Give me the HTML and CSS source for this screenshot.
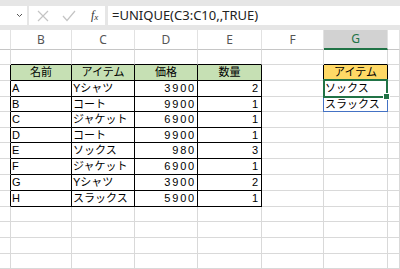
FILE: index.html
```html
<!DOCTYPE html>
<html lang="ja">
<head>
    <meta charset="UTF-8">
    <title>UNIQUE</title>
    <link rel="stylesheet" href="styles.css">
</head>
<body>
    <div class="fbar">
        <div class="namebox">
            <svg width="7" height="5" viewBox="0 0 7 5"><path d="M1 1 L3.5 3.5 L6 1" fill="none" stroke="#555" stroke-width="1"/></svg>
        </div>
        <div class="fbuttons">
            <svg width="12" height="12" viewBox="0 0 12 12"><path d="M1 1 L11 11 M11 1 L1 11" stroke="#c4c4c4" stroke-width="1.2"/></svg>
            <svg width="14" height="12" viewBox="0 0 14 12"><path d="M1 6 L5 10.5 L13 1" fill="none" stroke="#c4c4c4" stroke-width="1.2"/></svg>
            <span class="fx">f<sub>x</sub></span>
        </div>
        <div class="formula">=UNIQUE(C3:C10,,TRUE)</div>
    </div>

    <div id="sheet" class="sheet">
        <div class="spill"></div>
        <div class="select"><span class="handle"></span></div>
    </div>

    <script>
        const cols = ['', 'B', 'C', 'D', 'E', 'F', 'G', ''];
        const data = [
            ['A', 'Yシャツ', 3900, 2],
            ['B', 'コート', 9900, 1],
            ['C', 'ジャケット', 6900, 1],
            ['D', 'コート', 9900, 1],
            ['E', 'ソックス', 980, 3],
            ['F', 'ジャケット', 6900, 1],
            ['G', 'Yシャツ', 3900, 2],
            ['H', 'スラックス', 5900, 1]
        ];
        const unique = ['ソックス', 'スラックス'];
        const sheet = document.getElementById('sheet');

        function cell(text, cls) {
            const div = document.createElement('div');
            div.className = 'cell ' + (cls || '');
            div.textContent = text;
            sheet.appendChild(div);
        }

        // column headers
        cols.forEach((c, i) => cell(c, i === 6 ? 'colhead active' : 'colhead'));

        // sheet rows 1..14
        for (let r = 1; r <= 14; r++) {
            for (let c = 0; c < 8; c++) {
                let text = '';
                let cls = [];
                const inTable = r >= 2 && r <= 10 && c >= 1 && c <= 4;
                if (inTable) cls.push('tb');
                if (r === 1 && c >= 1 && c <= 4) cls.push('edge-b');
                if (c === 0 && r >= 2 && r <= 10) cls.push('edge-r');

                if (r === 2 && c >= 1 && c <= 4) {
                    text = ['名前', 'アイテム', '価格', '数量'][c - 1];
                    cls.push('head');
                } else if (inTable) {
                    const v = data[r - 3][c - 1];
                    text = v;
                    if (typeof v === 'number') cls.push('num');
                }

                if (c === 6) {
                    if (r === 1) cls.push('edge-b');
                    if (r === 2) { text = 'アイテム'; cls.push('tb', 'yellow'); }
                    if (r === 3 || r === 4) text = unique[r - 3];
                }
                if (c === 5 && r === 2) cls.push('edge-r');

                cell(text, cls.join(' '));
            }
        }
    </script>
</body>
</html>
```

FILE: styles.css
```css
body {
    margin: 0;
    width: 400px;
    height: 269px;
    overflow: hidden;
    background-color: #fff;
    font-family: "Liberation Sans", "Noto Sans CJK JP", sans-serif;
}
.fbar {
    display: flex;
    gap: 2px;
    height: 30px;
    padding: 6px 0 5px;
    box-sizing: border-box;
    background-color: #e6e6e6;
}
.namebox {
    width: 27px;
    background-color: #fff;
    display: flex;
    align-items: center;
    justify-content: flex-end;
    padding-right: 4px;
    box-sizing: border-box;
}
.fbuttons {
    width: 76px;
    background-color: #fff;
    display: flex;
    align-items: center;
    gap: 13px;
    padding-left: 8px;
    box-sizing: border-box;
}
.fx {
    font-family: "Liberation Serif", serif;
    font-style: italic;
    font-size: 12px;
    color: #333;
    margin-left: 2px;
}
.fx sub {
    font-size: 9px;
    vertical-align: -1px;
}
.formula {
    flex: 1;
    margin-left: 1px;
    background-color: #fff;
    font-family: "Noto Sans", sans-serif;
    font-size: 13px;
    color: #222;
    line-height: 19px;
    padding-left: 4px;
}
.sheet {
    position: relative;
    display: grid;
    grid-template-columns: 11px 61px 63px 63px 64px 62px 64px 12px;
    grid-template-rows: 20px 15px 16px 16px 15px 16px 15px 16px 16px 16px 16px 15px 16px 16px 15px;
}
.cell {
    box-sizing: border-box;
    border-right: 1px solid #d9d9d9;
    border-bottom: 1px solid #d9d9d9;
    font-size: 11px;
    line-height: 14px;
    color: #000;
    padding: 0 1px;
    white-space: nowrap;
    overflow: hidden;
}
.colhead {
    font-family: "Noto Sans", sans-serif;
    font-size: 12px;
    color: #555;
    text-align: center;
    line-height: 19px;
    border-right-color: #e2e2e2;
    border-bottom: 1px solid #c6c6c6;
}
.colhead.active {
    background-color: #d2d2d2;
    color: #217346;
    border-bottom: 2px solid #217346;
    line-height: 18px;
}
.tb {
    border-right-color: #000;
    border-bottom-color: #000;
}
.edge-b {
    border-bottom-color: #000;
}
.edge-r {
    border-right-color: #000;
}
.head {
    background-color: #c6e0b4;
    text-align: center;
}
.yellow {
    background-color: #ffd966;
    text-align: center;
}
.num {
    text-align: right;
    letter-spacing: 1.8px;
    padding-right: 1px;
}
.spill {
    position: absolute;
    inset: -1px 0 0 -1px;
    grid-column: 7 / 8;
    grid-row: 4 / 6;
    border: 1px solid #4472c4;
    pointer-events: none;
}
.select {
    position: absolute;
    inset: -2px 0 -1px -1px;
    grid-column: 7 / 8;
    grid-row: 4 / 5;
    border: 2px solid #217346;
    pointer-events: none;
    z-index: 1;
}
.handle {
    position: absolute;
    right: -4px;
    bottom: -4px;
    width: 5px;
    height: 5px;
    background-color: #217346;
    border: 1px solid #fff;
}
```
